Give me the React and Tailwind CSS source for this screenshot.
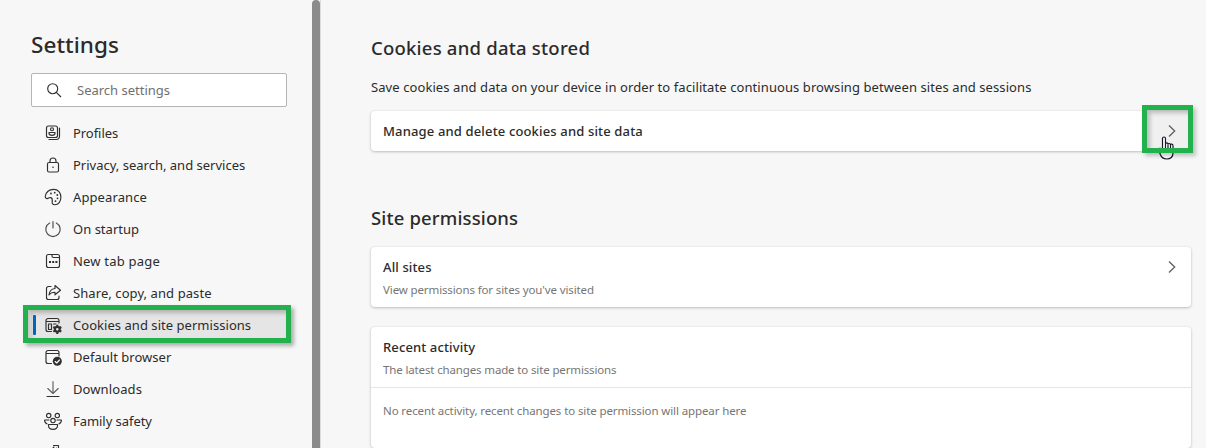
const Icon = ({ children }) => (
  <svg className="h-[18px] w-[18px] shrink-0 overflow-visible" viewBox="0 0 18 18" fill="none" stroke="#303030" strokeWidth="1.15" strokeLinecap="round" strokeLinejoin="round">
    {children}
  </svg>
);

const icons = {
  profiles: (
    <Icon>
      <rect x="2.500" y="2" width="11" height="11.500" rx="2" />
      <path d="M15.500 4v8.500a3 3 0 0 1-3 3H5" />
      <circle cx="8" cy="5.200" r="1.500" />
      <path d="M5 8.500h6v.8c0 1.300-1.200 2-3 2s-3-.7-3-2z" />
    </Icon>
  ),
  lock: (
    <Icon>
      <rect x="3.500" y="6.500" width="11" height="9.500" rx="1.500" />
      <path d="M6 6.500V5a3 3 0 0 1 6 0v1.500" />
      <circle cx="9" cy="11.200" r=".8" fill="#303030" stroke="none" />
    </Icon>
  ),
  palette: (
    <Icon>
      <path d="M1.200 8.500C2 4 5.500 1.300 9.700 1.300c4.500 0 7.200 3.500 7.200 7.700 0 4.500-2.500 7.700-6 7.700-2.200 0-3-1.300-2.700-3 .3-1.800.2-3.600-1.500-4.100-1.500-.4-2.300 1.200-3.700 1-1.300-.2-1.900-1.100-1.800-2.100z" />
      <g fill="#303030" stroke="none">
        <circle cx="7" cy="5.500" r=".9" />
        <circle cx="10.700" cy="4.700" r=".9" />
        <circle cx="13.300" cy="7" r=".9" />
        <circle cx="13.500" cy="10.300" r=".9" />
        <circle cx="11.500" cy="13.200" r=".9" />
      </g>
    </Icon>
  ),
  power: (
    <Icon>
      <path d="M9 1.500v6.500M5.700 3a7.200 7.200 0 1 0 6.600 0" stroke="#484848" />
    </Icon>
  ),
  tab: (
    <Icon>
      <rect x="2.500" y="2.500" width="13" height="13" rx="2" />
      <path d="M8 2.500v1.500c0 .8.500 1.500 1.500 1.500h6" />
      <path d="M5 10h2M8.200 10h2M11.400 10h2" strokeWidth="2" strokeLinecap="butt" />
    </Icon>
  ),
  share: (
    <Icon>
      <path d="M7 2.500H4.500a2 2 0 0 0-2 2v9a2 2 0 0 0 2 2h8.500a2 2 0 0 0 2-2V12" />
      <path d="M11 1.500l5.500 4.700-5.500 4.600V8.300c-2.700-.1-4.500.7-6 2.700.3-3.500 2.200-6 6-6.500z" />
    </Icon>
  ),
  cookies: (
    <Icon>
      <path d="M7.500 15.500H4a2 2 0 0 1-2-2v-9a2 2 0 0 1 2-2h9a2 2 0 0 1 2 2V7M2 5.500h13" />
      <path d="M4.500 8h3v5.500h-3zM9.500 8h2.500" />
      <circle cx="13.300" cy="13.300" r="2.400" strokeWidth="2.200" />
      <path d="M13.300 8.700v2M13.300 15.900v2M9.300 11l1.700 1M15.600 14.600l1.700 1M9.300 15.600l1.700-1M15.600 12l1.700-1" strokeWidth="2.100" strokeLinecap="butt" />
    </Icon>
  ),
  browser: (
    <Icon>
      <path d="M7.500 15.500H4a2 2 0 0 1-2-2v-9a2 2 0 0 1 2-2h9a2 2 0 0 1 2 2V8M2 5.500h13" />
      <circle cx="13.300" cy="13.300" r="4.500" fill="#303030" stroke="none" />
      <path d="M11.200 13.500l1.500 1.500 2.800-3" stroke="#fff" />
    </Icon>
  ),
  download: (
    <Icon>
      <path d="M9 1.500v12M3.800 8.500l5.200 5 5.200-5" stroke="#606060" />
      <path d="M3 16.500h12" />
    </Icon>
  ),
  family: (
    <Icon>
      <circle cx="4.700" cy="3.500" r="2.200" />
      <circle cx="13.300" cy="3.500" r="2.200" />
      <circle cx="9" cy="8.500" r="2.200" />
      <path d="M4.500 12.500h9v1c0 2.200-1.700 3.900-4.500 3.900s-4.500-1.700-4.500-3.900z" />
      <path d="M5 8H.600c0 2 .7 3.300 2.400 3.900M13 8h4.400c0 2-.7 3.300-2.400 3.900" />
    </Icon>
  ),
  language: (
    <Icon>
      <path d="M9.500 1.500h5v8M12.500 4v5M8 5l2-2" />
    </Icon>
  ),
};

const items = [
  ["profiles", "Profiles", "tracking-[-0.05px]"],
  ["lock", "Privacy, search, and services", "tracking-[0px]"],
  ["palette", "Appearance", "tracking-[0.1px]"],
  ["power", "On startup", "tracking-[0.02px]"],
  ["tab", "New tab page", "tracking-[0.2px]"],
  ["share", "Share, copy, and paste", "tracking-[0.08px]"],
  ["cookies", "Cookies and site permissions", "tracking-[0.04px]"],
  ["browser", "Default browser", "tracking-[0.03px]"],
  ["download", "Downloads", "tracking-[0.1px]"],
  ["family", "Family safety", "tracking-[-0.05px]"],
  ["language", "", ""],
];

const Chevron = () => (
  <svg className="mr-[15px] h-3 w-2 shrink-0" viewBox="0 0 8 12" fill="none" stroke="#606060" strokeWidth="1.3">
    <path d="M1 .500l5.700 5.500L1 11.500" />
  </svg>
);

const card = "rounded-[4px] bg-white shadow-[0_1px_3px_rgba(0,0,0,0.22),0_0_2px_rgba(0,0,0,0.08)]";

export default function App() {
  return (
    <div className="relative flex h-[448px] w-[1206px] overflow-hidden bg-[#f7f7f7] font-['Noto_Sans',sans-serif] text-[13px] whitespace-nowrap text-[#2b2b2b]">
      <aside className="h-full w-[312px] shrink-0 overflow-hidden pl-[31px]">
        <h1 className="mt-[29px] h-8 text-[22.500px] leading-8 font-medium tracking-[0.05px]"><span>Settings</span></h1>
        <div className="mt-3 flex h-[34px] w-64 items-center rounded-[2px] border border-[#b5b5b5] bg-white pl-[14px] text-[#707070]">
          <svg className="h-4 w-4" viewBox="0 0 16 16" fill="none" stroke="#303030" strokeWidth="1.150">
            <circle cx="6.700" cy="6.700" r="5" />
            <path d="M10.300 10.300l4.700 4.700" />
          </svg>
          <span className="mt-px ml-[15px] tracking-[0px]">Search settings</span>
        </div>
        <nav className="mt-[10px] w-64">
          {items.map(([id, label, tracking]) => (
            <div key={id} className={"relative flex h-8 items-center pl-[13px] " + (id === "cookies" ? "bg-[#e5e5e5]" : "")}>
              {id === "cookies" && <span className="absolute top-[6px] left-[2px] h-5 w-[3px] rounded-[1px] bg-[#0067c0]" />}
              {icons[id]}
              {label && <span className={"ml-[11px] leading-5 " + tracking}>{label}</span>}
            </div>
          ))}
        </nav>
      </aside>
      <div className="h-full w-2 shrink-0 rounded-t-[4px] bg-[#8b8b8b]" />
      <div className="h-full w-px shrink-0 bg-[#dcdcdc]" />
      <main className="h-full w-[870px] shrink-0 pl-[50px]">
        <h2 className="mt-[34px] h-7 text-[18.500px] leading-7 font-medium tracking-[0.22px]"><span>Cookies and data stored</span></h2>
        <p className="mt-[15px] h-5 leading-5 tracking-[0.085px]"><span>Save cookies and data on your device in order to facilitate continuous browsing between sites and sessions</span></p>
        <section className={"mt-[14px] flex h-10 items-center overflow-hidden pl-3 " + card}>
          <span className="mt-px flex-1 font-medium tracking-[0.15px]"><span>Manage and delete cookies and site data</span></span>
          <div className="flex h-10 w-11 items-center justify-end bg-[#f0f0f0]"><Chevron /></div>
        </section>
        <h2 className="mt-[53px] h-7 text-[18.500px] leading-7 font-medium tracking-[0.14px]"><span>Site permissions</span></h2>
        <section className={"mt-[15px] flex h-[60px] justify-between pl-3 " + card}>
          <div>
            <h3 className="mt-[10px] h-5 leading-5 font-medium tracking-[0.12px]"><span>All sites</span></h3>
            <p className="mt-[3px] h-5 text-[11.500px] leading-5 tracking-[-0.12px] text-[#767676]"><span>View permissions for sites you've visited</span></p>
          </div>
          <div className="mt-[14px]"><Chevron /></div>
        </section>
        <section className={"mt-5 h-[121px] " + card}>
          <div className="h-[61px] border-b border-[#e5e5e5] pt-[10px] pl-3">
            <h3 className="h-5 leading-5 font-medium tracking-[0.12px]"><span>Recent activity</span></h3>
            <p className="mt-[3px] h-5 text-[11.500px] leading-5 tracking-[-0.14px] text-[#767676]"><span>The latest changes made to site permissions</span></p>
          </div>
          <p className="mt-[13px] pl-3 text-[11.500px] leading-5 tracking-[-0.11px] text-[#767676]"><span>No recent activity, recent changes to site permission will appear here</span></p>
        </section>
      </main>
      <svg className="absolute top-[136px] left-[1158px] h-6 w-[18px]" viewBox="0 0 18 24" fill="white" stroke="#171728" strokeWidth="1.200">
        <path d="M4.500 16V2.500c0-2 3-2 3 0V8c0-1.500 2.500-1.500 2.500 0v.5c0-1.400 2.500-1.400 2.500.5 0-1.400 2.500-1 2.500.7V17c0 3.700-2.500 6-6.500 6-3 0-5-1.500-6.200-4.500L1 14c-.5-1.700 1.500-2.200 2.300-.8z" />
        <path d="M7.500 8v4M10 8.500V12M12.500 9v3" />
      </svg>
      <div className="absolute top-[305px] left-[23px] h-[38px] w-[268px] border-[5px] border-[#22b14c] shadow-[3px_3px_4px_rgba(0,0,0,0.3),inset_3px_3px_4px_rgba(0,0,0,0.22)]" />
      <div className="absolute top-[105px] left-[1142px] h-12 w-[51px] border-[5px] border-[#22b14c] shadow-[3px_3px_4px_rgba(0,0,0,0.22),inset_3px_3px_4px_rgba(0,0,0,0.22)]" />
    </div>
  );
}
